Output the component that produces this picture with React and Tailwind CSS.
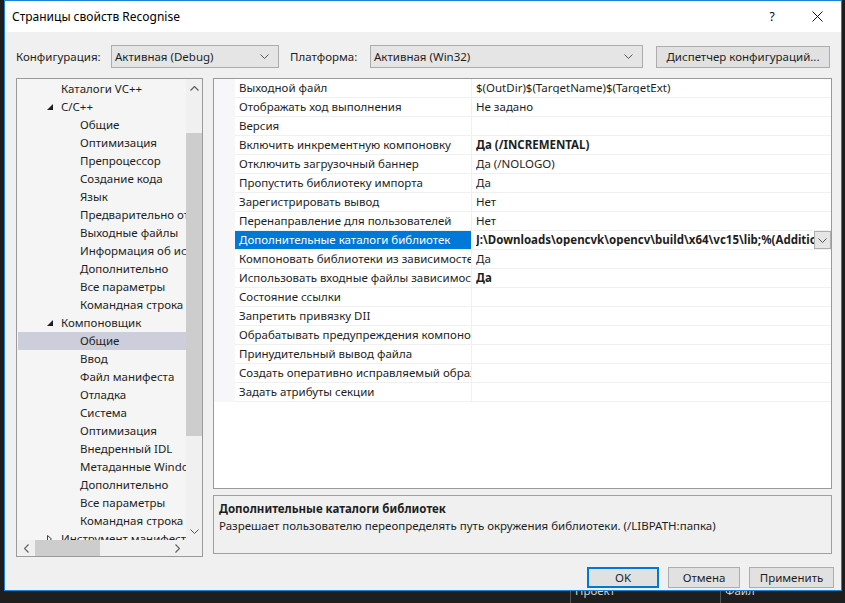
const treeItems = [
  { lvl: 1, text: "Каталоги VC++" },
  { lvl: 1, text: "C/C++", open: true },
  { lvl: 2, text: "Общие" },
  { lvl: 2, text: "Оптимизация" },
  { lvl: 2, text: "Препроцессор" },
  { lvl: 2, text: "Создание кода" },
  { lvl: 2, text: "Язык" },
  { lvl: 2, text: "Предварительно откомпилированные заголовки" },
  { lvl: 2, text: "Выходные файлы" },
  { lvl: 2, text: "Информация об источниках" },
  { lvl: 2, text: "Дополнительно" },
  { lvl: 2, text: "Все параметры" },
  { lvl: 2, text: "Командная строка" },
  { lvl: 1, text: "Компоновщик", open: true },
  { lvl: 2, text: "Общие", selected: true },
  { lvl: 2, text: "Ввод" },
  { lvl: 2, text: "Файл манифеста" },
  { lvl: 2, text: "Отладка" },
  { lvl: 2, text: "Система" },
  { lvl: 2, text: "Оптимизация" },
  { lvl: 2, text: "Внедренный IDL" },
  { lvl: 2, text: "Метаданные Windows" },
  { lvl: 2, text: "Дополнительно" },
  { lvl: 2, text: "Все параметры" },
  { lvl: 2, text: "Командная строка" },
  { lvl: 1, text: "Инструмент манифеста", closed: true },
];

const props = [
  ["Выходной файл", "$(OutDir)$(TargetName)$(TargetExt)"],
  ["Отображать ход выполнения", "Не задано"],
  ["Версия", ""],
  ["Включить инкрементную компоновку", "Да (/INCREMENTAL)", true],
  ["Отключить загрузочный баннер", "Да (/NOLOGO)"],
  ["Пропустить библиотеку импорта", "Да"],
  ["Зарегистрировать вывод", "Нет"],
  ["Перенаправление для пользователей", "Нет"],
  ["Дополнительные каталоги библиотек", "J:\\Downloads\\opencvk\\opencv\\build\\x64\\vc15\\lib;%(AdditionalLibraryDirectories)", true, true],
  ["Компоновать библиотеки из зависимостей", "Да"],
  ["Использовать входные файлы зависимостей", "Да", true],
  ["Состояние ссылки", ""],
  ["Запретить привязку DII", ""],
  ["Обрабатывать предупреждения компоновщика как ошибки", ""],
  ["Принудительный вывод файла", ""],
  ["Создать оперативно исправляемый образ", ""],
  ["Задать атрибуты секции", ""],
];

function Chevron({ className }) {
  return (
    <svg width="9" height="5" viewBox="0 0 9 5" className={className}>
      <path d="M0.5 0.5 L4.5 4.5 L8.5 0.5" fill="none" stroke="#555" strokeWidth="1" />
    </svg>
  );
}

function Select({ w, text }) {
  return (
    <div className={`${w} h-[23px] border border-[#acacac] bg-[#e5e5e5] flex items-center pl-[3px] pr-[9px]`}>
      <span className="flex-1">{text}</span>
      <Chevron />
    </div>
  );
}

function Btn({ w, children, primary }) {
  return (
    <div
      className={`${w} h-[21px] bg-[#e1e1e1] flex items-center justify-center ${
        primary ? "border-2 border-[#0078d7]" : "border border-[#adadad]"
      }`}
    >
      {children}
    </div>
  );
}

function Tree() {
  return (
    <div className="w-[187px] h-[479px] border border-[#9a9a9a] bg-[#f5f5f5] flex flex-col">
      <div className="flex flex-1 min-h-0">
        <div className="flex-1 min-w-0 overflow-hidden pt-[1px]">
          {treeItems.map((it, i) => (
            <div
              key={i}
              className={`h-[18px] flex items-center whitespace-nowrap ${it.selected ? "bg-[#cccedb] ml-[1px]" : ""}`}
            >
              {it.lvl === 1 ? (
                <>
                  <span className="w-[30px] shrink-0" />
                  <span className="w-[14px] shrink-0 flex items-center">
                    {it.open && (
                      <svg width="6" height="6" viewBox="0 0 6 6">
                        <path d="M6 0 L6 6 L0 6 Z" fill="#1e1e1e" />
                      </svg>
                    )}
                    {it.closed && (
                      <svg width="5" height="8" viewBox="0 0 5 8">
                        <path d="M0.5 0.5 L4.5 4 L0.5 7.5 Z" fill="none" stroke="#444" strokeWidth="1" />
                      </svg>
                    )}
                  </span>
                </>
              ) : (
                <span className={`${it.selected ? "w-[62px]" : "w-[63px]"} shrink-0`} />
              )}
              <span>{it.text}</span>
            </div>
          ))}
        </div>
        <div className="w-[16px] bg-[#f0f0f0] flex flex-col items-center">
          <div className="h-[18px] flex items-center justify-center">
            <svg width="9" height="5" viewBox="0 0 9 5">
              <path d="M0.5 4.5 L4.5 0.5 L8.5 4.5" fill="none" stroke="#606060" strokeWidth="1.2" />
            </svg>
          </div>
          <div className="h-[36px]" />
          <div className="w-[16px] h-[303px] bg-[#cdcdcd]" />
          <div className="flex-1" />
          <div className="h-[18px] flex items-center justify-center">
            <Chevron />
          </div>
        </div>
      </div>
      <div className="h-[16px] flex">
        <div className="flex-1 bg-[#f0f0f0] flex items-center">
          <div className="w-[18px] flex justify-center">
            <svg width="5" height="9" viewBox="0 0 5 9">
              <path d="M4.5 0.5 L0.5 4.5 L4.5 8.5" fill="none" stroke="#606060" strokeWidth="1.2" />
            </svg>
          </div>
          <div className="w-[65px] h-[16px] bg-[#cdcdcd]" />
          <div className="flex-1" />
          <div className="w-[18px] flex justify-center">
            <svg width="5" height="9" viewBox="0 0 5 9">
              <path d="M0.5 0.5 L4.5 4.5 L0.5 8.5" fill="none" stroke="#606060" strokeWidth="1.2" />
            </svg>
          </div>
        </div>
        <div className="w-[16px] bg-[#f0f0f0]" />
      </div>
    </div>
  );
}

function Grid() {
  return (
    <div className="h-[411px] border border-[#9a9a9a] bg-white">
      {props.map(([name, val, bold, sel], i) => (
        <div key={i} className="h-[19px] flex">
          <div className="w-[21px] shrink-0 bg-[#f7f7f9]" />
          <div
            className={`w-[236px] shrink-0 border-b border-[#f0f0f0] px-[4px] flex items-center whitespace-nowrap overflow-hidden ${
              sel ? "bg-[#0078d7] text-white" : ""
            }`}
          >
            {name}
          </div>
          <div className="flex-1 min-w-0 border-l border-b border-[#f0f0f0] pl-[4px] flex items-center">
            <span className={`flex-1 min-w-0 whitespace-nowrap overflow-hidden ${bold ? "font-bold" : ""}`}>{val}</span>
            {sel && (
              <div className="w-[17px] h-[18px] shrink-0 border border-[#adadad] bg-[#e5e5e5] flex items-center justify-center">
                <Chevron />
              </div>
            )}
          </div>
        </div>
      ))}
    </div>
  );
}

export default function App() {
  return (
    <div className="w-[845px] h-[603px] bg-[#1e1e1e] overflow-hidden font-['Noto_Sans',sans-serif] text-[11.5px] text-[#1e1e1e] leading-none">
      <div className="ml-[4px] w-[838px] h-[591px] border border-[#1883d7] bg-[#f0f0f0] flex flex-col">
        <div className="h-[31px] bg-white flex items-center pl-[7px] pr-[18px] text-[12px]">
          <span className="flex-1 text-black">Страницы свойств Recognise</span>
          <span className="w-[12px] text-center text-black">?</span>
          <span className="w-[34px]" />
          <svg width="11" height="11" viewBox="0 0 11 11">
            <path d="M0.5 0.5 L10.5 10.5 M10.5 0.5 L0.5 10.5" stroke="#111" strokeWidth="1" />
          </svg>
        </div>

        <div className="flex items-center pt-[13px] pl-[11px]">
          <span className="w-[95px]">Конфигурация:</span>
          <Select w="w-[168px]" text="Активная (Debug)" />
          <span className="w-[91px] pl-[11px]">Платформа:</span>
          <Select w="w-[273px]" text="Активная (Win32)" />
          <span className="w-[13px]" />
          <Btn w="w-[174px] h-[22px]">Диспетчер конфигураций...</Btn>
        </div>

        <div className="flex pt-[10px] pl-[11px]">
          <Tree />
          <div className="w-[619px] ml-[10px] flex flex-col">
            <Grid />
            <div className="mt-[6px] h-[59px] border border-[#a0a0a0] bg-[#f0f0f0] px-[5px] pt-[7px]">
              <div className="font-bold">Дополнительные каталоги библиотек</div>
              <div className="mt-[5px]">Разрешает пользователю переопределять путь окружения библиотеки. (/LIBPATH:папка)</div>
            </div>
          </div>
        </div>

        <div className="flex justify-end gap-[9px] pr-[7px] pt-[10px]">
          <Btn w="w-[72px]" primary>OK</Btn>
          <Btn w="w-[72px]">Отмена</Btn>
          <Btn w="w-[85px]">Применить</Btn>
        </div>
      </div>
      <div className="h-[12px] flex text-[#d0d0d0] overflow-hidden">
        <span className="w-[570px]" />
        <span className="border-l border-[#555] pl-[4px] w-[150px] -mt-[6px]">Проект</span>
        <span className="border-l border-[#555] pl-[4px] -mt-[6px]">Файл</span>
      </div>
    </div>
  );
}
